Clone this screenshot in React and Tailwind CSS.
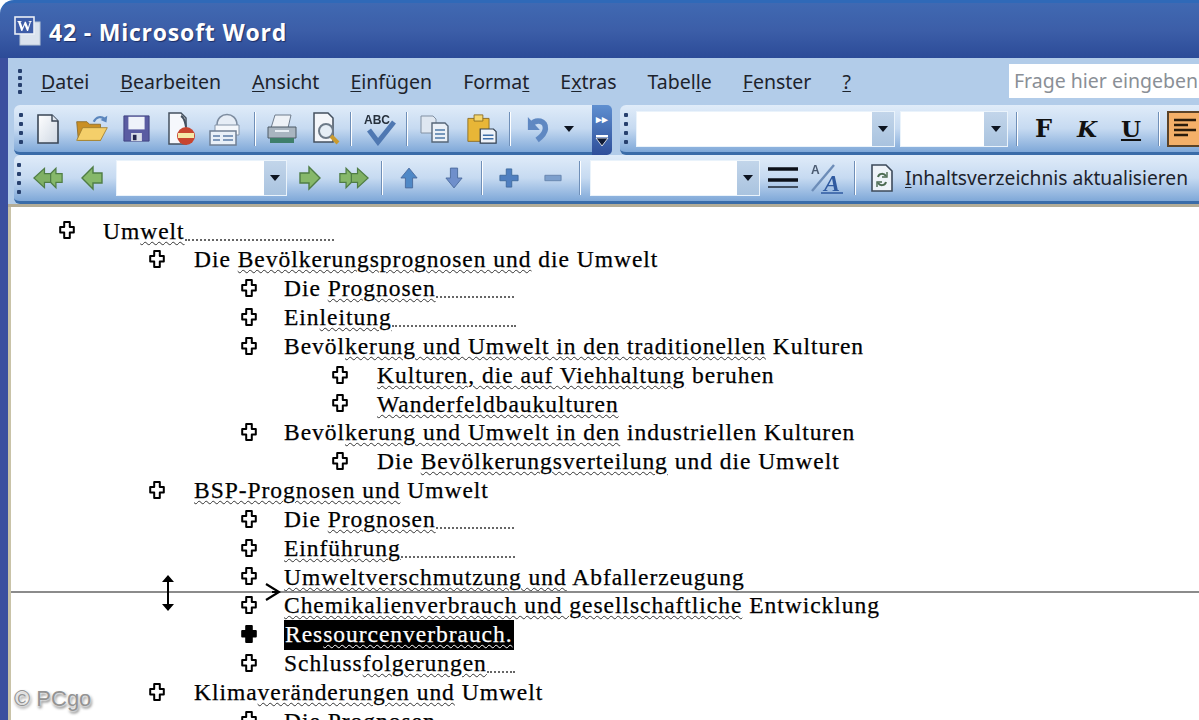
import React from "react";

const Handle = ({ className = "" }) => (
  <div className={"flex flex-col gap-[5px] " + className}>
    {[0, 1, 2, 3].map((i) => (
      <span key={i} className="block h-[4px] w-[4px] rounded-[1px] bg-[#27406e]" />
    ))}
  </div>
);

const Sep = ({ className = "" }) => (
  <span className={"block h-[34px] w-[2px] shrink-0 border-r border-white bg-[#6f8fb8] " + className} />
);

const Caret = () => (
  <svg width="12" height="8" viewBox="0 0 12 8"><path d="M1 1h10L6 7z" fill="#0d1420" /></svg>
);

const Combo = ({ className = "", btn = "w-[22px]" }) => (
  <div className={"flex h-[36px] shrink-0 border border-[#eaf3fb] bg-white " + className}>
    <div className="flex-1" />
    <div className={"flex items-center justify-center bg-linear-to-b from-[#c2d5ea] to-[#a9c3df] " + btn}>
      <Caret />
    </div>
  </div>
);

const Cell = ({ className = "w-[44px]", children }) => (
  <div className={"flex shrink-0 items-center justify-center blur-[0.5px] " + className}>{children}</div>
);

const DocSheet = () => (
  <svg width="26" height="32" viewBox="0 0 26 32">
    <defs><linearGradient id="ds" x1="0" y1="0" x2="1" y2="1"><stop offset="0" stopColor="#fff" /><stop offset="1" stopColor="#cfd8e4" /></linearGradient></defs>
    <path d="M3 2h14l6 6v22H3z" fill="url(#ds)" stroke="#3a4656" strokeWidth="1.6" />
    <path d="M17 2v6h6" fill="#dfe6ef" stroke="#3a4656" strokeWidth="1.4" />
  </svg>
);
const Folder = () => (
  <svg width="34" height="29" viewBox="0 0 40 34">
    <path d="M2 9h12l3 3h13v19H4z" fill="#c98f24" stroke="#8a6a2a" />
    <path d="M2 31l7-15h29l-8 15z" fill="#f4cf6a" stroke="#a07f30" />
    <path d="M22 9c3-6 9-7 13-3" fill="none" stroke="#5b86bd" strokeWidth="2.6" />
    <path d="M38 2l-1 8-7-3z" fill="#5b86bd" />
  </svg>
);
const Floppy = () => (
  <svg width="27" height="27" viewBox="0 0 30 30">
    <path d="M1 1h28v28H1z" fill="#5a5ca2" stroke="#3c3f7e" />
    <path d="M6 2h18v14H6z" fill="#eef2fa" />
    <path d="M9 20h12v9H9z" fill="#d9dde8" />
    <path d="M11 22h4v6h-4z" fill="#24264f" />
  </svg>
);
const Perm = () => (
  <svg width="32" height="36" viewBox="0 0 32 36">
    <path d="M4 2h12l5 5v26H4z" fill="#f6f8fc" stroke="#44505f" strokeWidth="1.5" />
    <path d="M16 5c4 2 4 7 5 11" fill="none" stroke="#44505f" strokeWidth="2" />
    <circle cx="21" cy="25" r="9" fill="#c8452f" />
    <path d="M13 22h16v5H13z" fill="#f5e9a8" />
  </svg>
);
const MailPrint = () => (
  <svg width="34" height="34" viewBox="0 0 34 34">
    <path d="M8 13c0-14 20-14 20 0v8H8z" fill="#e6edf6" stroke="#7d8c9f" strokeWidth="1.6" />
    <path d="M6 13h24v10H6z" fill="#f4f7fb" stroke="#8494a8" />
    <rect x="1" y="19" width="26" height="14" fill="#e9f0f8" stroke="#6f7f94" strokeWidth="1.5" />
    <path d="M4 24h7M4 28h7M14 24h10M14 28h10" stroke="#5c7ca6" strokeWidth="1.6" />
  </svg>
);
const Printer = () => (
  <svg width="32" height="30" viewBox="0 0 32 30">
    <path d="M9 1h16l-3 13H5z" fill="#eef2f7" stroke="#6f7c8c" />
    <path d="M2 13h28v11H2z" fill="#a9b5c0" stroke="#4d5a66" />
    <path d="M4 24h24v5H4z" fill="#3f7f6a" />
    <path d="M9 17h14" stroke="#e8eef4" strokeWidth="2" />
  </svg>
);
const Preview = () => (
  <svg width="30" height="34" viewBox="0 0 30 34">
    <path d="M3 1h14l5 5v24H3z" fill="#f4f6fa" stroke="#44505f" strokeWidth="1.5" />
    <circle cx="15" cy="19" r="7" fill="#e6eef6" stroke="#6d7a88" strokeWidth="2" />
    <path d="M20 24l7 7" stroke="#c99a2f" strokeWidth="4" />
  </svg>
);
const Spell = () => (
  <svg width="34" height="34" viewBox="0 0 34 34">
    <text x="1" y="12" fontFamily="Liberation Sans, sans-serif" fontWeight="700" fontSize="12" fill="#26303c">ABC</text>
    <path d="M6 18l9 12L31 10" fill="none" stroke="#4f78b2" strokeWidth="5" />
  </svg>
);
const Copy = () => (
  <svg width="30" height="28" viewBox="0 0 30 28">
    <path d="M1 1h12l3 3v14H1z" fill="#dfe7f1" stroke="#8291a3" />
    <path d="M12 8h13l3 3v16H12z" fill="#eaf0f7" stroke="#566678" strokeWidth="1.4" />
    <path d="M15 15h10M15 19h10M15 23h10" stroke="#4f7aa8" strokeWidth="1.6" />
  </svg>
);
const Paste = () => (
  <svg width="30" height="30" viewBox="0 0 34 34">
    <path d="M1 5h24v26H1z" fill="#e8b637" stroke="#8a6a20" />
    <path d="M8 1h10v7H8z" fill="#f4d770" stroke="#8a6a20" />
    <path d="M15 17h15l3 3v13H15z" fill="#eef3f9" stroke="#324050" strokeWidth="1.4" />
    <path d="M18 24h12M18 28h12" stroke="#3f6fa8" strokeWidth="1.6" />
  </svg>
);
const Undo = () => (
  <svg width="24" height="28" viewBox="0 0 26 30">
    <path d="M5 11C11 3 22 6 21 15c-.5 5-5 9-9 12" fill="none" stroke="#5f88c2" strokeWidth="6" />
    <path d="M2 2v14h13z" fill="#5f88c2" />
  </svg>
);
const ArrowG = ({ dir = "r" }) => (
  <svg width="22" height="26" viewBox="0 0 22 26" className={dir === "l" ? "-scale-x-100" : ""}>
    <path d="M1 8h9V2l11 11-11 11v-6H1z" fill="#86b86a" stroke="#4f7d45" strokeWidth="1.4" />
  </svg>
);
const DoubleG = ({ dir = "r" }) => (
  <svg width="30" height="24" viewBox="0 0 34 26" className={dir === "l" ? "-scale-x-100" : ""}>
    <path d="M1 8h7V2l11 11L8 24v-6H1z" fill="#86b86a" stroke="#4f7d45" strokeWidth="1.4" />
    <path d="M14 8h7V2l12 11-12 11v-6h-7z" fill="#7fb064" stroke="#4f7d45" strokeWidth="1.4" />
  </svg>
);
const ArrowB = ({ up }) => (
  <svg width="18" height="22" viewBox="0 0 20 24" className={up ? "" : "rotate-180"}>
    <path d="M10 1l9 11h-5v11H6V12H1z" fill={up ? "#4f88c6" : "#6f8fcb"} stroke="#4a6a9c" />
  </svg>
);
const Plus = () => (
  <svg width="20" height="20" viewBox="0 0 22 22">
    <path d="M8 1h6v7h7v6h-7v7H8v-7H1V8h7z" fill="#4f7fc0" stroke="#3f6a9e" />
  </svg>
);
const Minus = () => (
  <svg width="18" height="8" viewBox="0 0 20 8"><path d="M1 1h18v6H1z" fill="#7d9fcc" stroke="#6482ab" /></svg>
);
const Lines = () => (
  <svg width="30" height="24" viewBox="0 0 30 24">
    <path d="M0 3h30M0 14h30" stroke="#0c1018" strokeWidth="3.4" />
    <path d="M0 21h30" stroke="#27313f" strokeWidth="1.6" />
  </svg>
);
const SortA = () => (
  <svg width="32" height="32" viewBox="0 0 32 32">
    <text x="0" y="12" fontFamily="Liberation Sans, sans-serif" fontSize="12" fontWeight="700" fill="#4a5a70">A</text>
    <text x="13" y="29" fontFamily="Liberation Serif, serif" fontStyle="italic" fontWeight="700" fontSize="24" fill="#2f5aa0">A</text>
    <path d="M1 29L23 3" stroke="#6d8db8" strokeWidth="2.4" />
    <path d="M10 31h22" stroke="#2f5aa0" strokeWidth="1.5" />
  </svg>
);
const Refresh = () => (
  <svg width="24" height="30" viewBox="0 0 24 30">
    <path d="M2 2h14l6 6v20H2z" fill="#eef3f8" stroke="#3d4a5a" strokeWidth="1.6" />
    <path d="M8 14c1-4 6-4 8-1M16 19c-1 4-6 4-8 1" fill="none" stroke="#4b6a50" strokeWidth="2" />
    <path d="M17 9v5h-5M7 24v-5h5" fill="none" stroke="#4b6a50" strokeWidth="1.4" />
  </svg>
);
const AlignIcon = () => (
  <svg width="24" height="24" viewBox="0 0 24 24">
    <path d="M1 3h22M1 8h14M1 13h22M1 18h14" stroke="#2a1c0c" strokeWidth="2.6" />
  </svg>
);

const ui = { fontFamily: '"Noto Sans", "Liberation Sans", sans-serif' };

const MENU = [
  ["", "D", "atei"],
  ["", "B", "earbeiten"],
  ["", "A", "nsicht"],
  ["", "E", "infügen"],
  ["Forma", "t", ""],
  ["E", "x", "tras"],
  ["Tabel", "l", "e"],
  ["", "F", "enster"],
  ["", "?", ""],
];

const CrossMark = ({ filled }) => (
  <svg width="18" height="20" viewBox="0 0 18 20" className="shrink-0">
    <path
      d="M6.2 2h5.6v5h4v5.5h-4V18H6.2v-5.5h-4V7h4z"
      fill={filled ? "#000" : "#fff"}
      stroke="#000"
      strokeWidth="2"
      strokeLinejoin="round"
    />
  </svg>
);

const W = ({ children }) => (
  <span className="underline decoration-wavy decoration-[#333] decoration-1 underline-offset-2">{children}</span>
);

const Dots = ({ className }) => (
  <span className={"inline-block h-[4px] translate-y-[2px] border-b-2 border-dotted border-[#666] " + className} />
);

const LEVELS = [
  { pad: "pl-[47px]", text: "ml-[27px]" },
  { pad: "pl-[137px]", text: "ml-[28px]" },
  { pad: "pl-[229px]", text: "ml-[26px]" },
  { pad: "pl-[320px]", text: "ml-[28px]" },
];

const ROWS = [
  [0, <>Um<W>welt</W><Dots className="w-[149px]" /></>],
  [1, <>Die <W>Bevölkerungsprognosen und</W> die Umwelt</>],
  [2, <>Die <W>Prognosen</W><Dots className="w-[78px]" /></>],
  [2, <>Ein<W>leitung</W><Dots className="w-[124px]" /></>],
  [2, <>Bevöl<W>kerung und Umwelt in den traditionellen</W> Kulturen</>],
  [3, <><W>Kulturen, die auf Viehhaltung</W> beruhen</>],
  [3, <><W>Wanderfeldbaukulturen</W></>],
  [2, <>Bevöl<W>kerung und Umwelt in den</W> industriellen Kulturen</>],
  [3, <>Die <W>Bevölkerungsverteilung</W> und die Umwelt</>],
  [1, <><W>BSP-Prognosen und</W> Umwelt</>],
  [2, <>Die <W>Prognosen</W><Dots className="w-[78px]" /></>],
  [2, <><W>Einführung</W><Dots className="w-[114px]" /></>],
  [2, <><W>Umweltverschmutzung und</W> Abfallerzeugung</>],
  [2, <><W>Chemikalienverbrauch und gesellschaftliche</W> Entwicklung</>],
  [2, "sel"],
  [2, <>Schluss<W>folgerungen</W><Dots className="w-[28px]" /></>],
  [1, <>Klima<W>veränderungen und</W> Umwelt</>],
  [2, <>Die Prognosen</>],
];

export default function App() {
  return (
    <div className="relative flex h-[720px] w-[1199px] flex-col overflow-hidden bg-white" style={ui}>
      {/* title bar */}
      <div className="flex h-[58px] shrink-0 items-center rounded-tl-[14px] border-t-[3px] border-[#2f69b8] bg-linear-to-b from-[#4069b2] via-[#3c5ea8] to-[#2c4b98] pl-[14px]">
        <svg width="28" height="30" viewBox="0 0 28 30" className="shrink-0 blur-[0.4px]">
          <rect x="6" y="6" width="20" height="23" fill="#dbe3ee" stroke="#b9c6d6" />
          <rect x="1" y="1" width="19" height="17" fill="#3e5da8" stroke="#e9eef6" strokeWidth="1.6" />
          <text x="3" y="15" fontFamily="Liberation Serif, serif" fontWeight="700" fontSize="15" fill="#fff">W</text>
        </svg>
        <span
          className="ml-[7px] translate-y-[2px] whitespace-nowrap text-[23px] font-bold leading-none tracking-[0.8px] text-white [text-shadow:1px_1px_1px_#1d2f66]"
          style={{ fontFamily: '"Open Sans", sans-serif' }}
        >
          42 - Microsoft Word
        </span>
      </div>

      <div className="flex min-h-0 flex-1">
        <div className="w-[8px] shrink-0 bg-[#3b4f9f]" />
        <div className="flex min-w-0 flex-1 flex-col">
          {/* chrome */}
          <div className="shrink-0 bg-[#b2cce9]">
            {/* menu */}
            <div className="flex h-[47px] items-center text-[#1d232c]">
              <Handle className="ml-[10px] !gap-[3px]" />
              <nav className="ml-[19px] flex gap-[31px] text-[19.5px] leading-none whitespace-nowrap">
                {MENU.map(([a, b, c], i) => (
                  <span key={i}>
                    {a}
                    <u className="underline-offset-2">{b}</u>
                    {c}
                  </span>
                ))}
              </nav>
              <div className="mr-0 ml-auto flex h-[34px] w-[190px] -translate-y-[1px] items-center overflow-hidden bg-white pl-[5px] text-[19.5px] whitespace-nowrap text-[#8a8f96]">
                Frage hier eingeben
              </div>
            </div>

            {/* row 1 */}
            <div className="flex h-[50px] items-stretch">
              <div className="ml-[6px] flex w-[578px] shrink-0 items-center rounded-l-[6px] border-b-[3px] border-[#3a6ca8] bg-linear-to-b from-[#e0ecf9] via-[#c6daf1] to-[#7fa8d8]">
                <Handle className="ml-[5px]" />
                <Cell className="ml-[3px] w-[44px]"><DocSheet /></Cell>
                <Cell><Folder /></Cell>
                <Cell><Floppy /></Cell>
                <Cell className="w-[46px]"><Perm /></Cell>
                <Cell className="w-[44px]"><MailPrint /></Cell>
                <Sep className="ml-[6px]" />
                <Cell className="ml-[4px] w-[44px]"><Printer /></Cell>
                <Cell><Preview /></Cell>
                <Sep className="ml-[2px]" />
                <Cell className="ml-[4px] w-[48px]"><Spell /></Cell>
                <Sep className="ml-[2px]" />
                <Cell className="ml-[6px] w-[42px]"><Copy /></Cell>
                <Cell className="ml-[2px] w-[48px]"><Paste /></Cell>
                <Sep className="ml-[3px]" />
                <Cell className="ml-[7px] w-[40px]"><Undo /></Cell>
                <Cell className="w-[22px]"><Caret /></Cell>
              </div>
              <div className="flex w-[20px] shrink-0 flex-col items-center justify-between rounded-r-[5px] bg-linear-to-b from-[#5f8fd0] to-[#2f4f9a] py-[8px] text-[11px] leading-none font-bold text-white">
                <span>▸▸</span>
                <span className="flex flex-col items-center"><span className="h-[2px] w-[12px] bg-white" /><svg width="14" height="10" viewBox="0 0 14 10"><path d="M1 1h12L7 9z" fill="#0f1a33" stroke="#fff" strokeWidth="0.8" /></svg></span>
              </div>
              <div className="ml-[8px] flex min-w-0 flex-1 items-center rounded-l-[6px] border-b-[3px] border-[#3a6ca8] bg-linear-to-b from-[#e0ecf9] via-[#c6daf1] to-[#7fa8d8]">
                <Handle className="ml-[4px]" />
                <Combo className="ml-[8px] w-[259px]" />
                <Combo className="ml-[5px] w-[108px]" btn="w-[23px]" />
                <Sep className="ml-[8px]" />
                <div className="ml-[4px] flex shrink-0 items-center text-[26px] leading-none text-[#111]" style={{ fontFamily: '"DejaVu Serif", serif' }}>
                  <span className="w-[43px] text-center font-bold text-[24px]">F</span>
                  <span className="w-[44px] text-center font-bold italic text-[23px]">K</span>
                  <span className="w-[44px] text-center font-bold text-[23px] underline underline-offset-2">U</span>
                </div>
                <Sep className="ml-[5px]" />
                <div className="ml-[7px] flex h-[36px] min-w-0 flex-1 items-center overflow-hidden border-y-2 border-l-2 border-[#5b4328] bg-[#f4b069] pl-[4px]">
                  <AlignIcon />
                </div>
              </div>
            </div>

            {/* row 2 */}
            <div className="flex h-[49px] items-stretch">
              <div className="ml-[6px] flex min-w-0 flex-1 items-center rounded-l-[6px] border-b-[3px] border-[#3a6ca8] bg-linear-to-b from-[#e0ecf9] via-[#c6daf1] to-[#7fa8d8]">
                <Handle className="ml-[3px]" />
                <Cell className="ml-[5px] w-[44px]"><DoubleG dir="l" /></Cell>
                <Cell className="w-[44px]"><ArrowG dir="l" /></Cell>
                <Combo className="ml-[2px] w-[171px]" />
                <Cell className="ml-[1px] w-[44px]"><ArrowG /></Cell>
                <Cell className="w-[44px]"><DoubleG /></Cell>
                <Sep className="ml-[5px]" />
                <Cell className="ml-[4px] w-[44px]"><ArrowB up /></Cell>
                <Cell className="w-[45px]"><ArrowB /></Cell>
                <Sep className="ml-[5px]" />
                <Cell className="ml-[4px] w-[44px]"><Plus /></Cell>
                <Cell className="w-[44px]"><Minus /></Cell>
                <Sep className="ml-[4px]" />
                <Combo className="ml-[9px] w-[170px]" />
                <Cell className="ml-[1px] w-[44px]"><Lines /></Cell>
                <Cell className="w-[44px]"><SortA /></Cell>
                <Sep className="ml-[5px]" />
                <Cell className="ml-[8px] w-[36px]"><Refresh /></Cell>
                <span className="ml-[5px] whitespace-nowrap text-[19.2px] leading-none text-[#1d232c]"><u className="underline-offset-2">I</u>nhaltsverzeichnis aktualisieren</span>
              </div>
            </div>
            <div className="h-[3px] bg-[#b3ac96]" />
          </div>

          {/* document */}
          <div
            className="relative flex-1 overflow-hidden border-l-[3px] border-[#c9c3a8] bg-white pt-[9px] text-[23.5px] leading-none tracking-[0.97px] whitespace-nowrap text-black [-webkit-text-stroke:0.25px_#000]"
            style={{ fontFamily: '"Liberation Serif", serif' }}
          >
            {ROWS.map(([lvl, content], i) => (
              <div key={i} className={"flex h-[28.83px] items-center " + LEVELS[lvl].pad}>
                <CrossMark filled={content === "sel"} />
                <span className={"translate-y-[1px] " + LEVELS[lvl].text}>
                  {content === "sel" ? (
                    <span className="inline-block bg-black py-[3px] pr-[1px] pl-[1px] text-white [-webkit-text-stroke:0.25px_#fff]">
                      Res<span className="underline decoration-wavy decoration-white decoration-1 underline-offset-2">sourcenverbrauch.</span>
                    </span>
                  ) : (
                    content
                  )}
                </span>
              </div>
            ))}
          </div>
        </div>
      </div>

      {/* drag indicator over the document */}
      <div className="absolute top-[591px] right-0 left-[11px] h-[2px] bg-[#8b8b8b]" />
      <svg width="16" height="40" viewBox="0 0 16 40" className="absolute top-[573px] left-[160px]">
        <path d="M8 3v34" stroke="#000" strokeWidth="2" />
        <path d="M2 9l6-7 6 7zM2 31l6 7 6-7z" fill="#000" />
      </svg>
      <svg width="18" height="20" viewBox="0 0 18 20" className="absolute top-[582px] left-[263px]">
        <path d="M3 2l13 8-13 8M9 10h7" fill="none" stroke="#000" strokeWidth="2.2" />
      </svg>

      {/* watermark */}
      <div
        className="absolute top-[685px] left-[14px] text-[22px] leading-[28px] whitespace-nowrap text-[#939393] [text-shadow:0_0_3px_#fff,0_0_3px_#fff,1px_2px_3px_#444]"
        style={{ fontFamily: '"Liberation Sans", sans-serif' }}
      >
        © PCgo
      </div>
    </div>
  );
}
